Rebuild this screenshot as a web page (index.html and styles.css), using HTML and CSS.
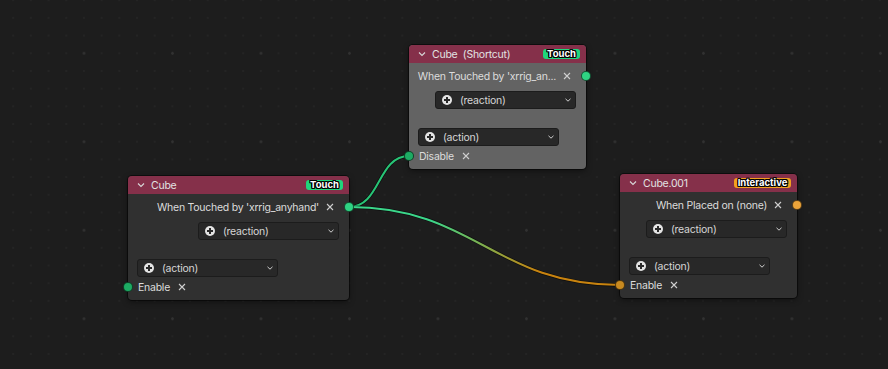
FILE: index.html
```html
<!DOCTYPE html>
<html lang="en">
<head>
    <meta charset="UTF-8">
    <title>Node Editor</title>
    <link rel="stylesheet" href="styles.css">
</head>
<body>
    <div class="canvas">
        <!-- links between sockets -->
        <svg class="links" width="888" height="369" viewBox="0 0 888 369">
            <defs>
                <linearGradient id="greenToOrange" gradientUnits="userSpaceOnUse" x1="349" y1="0" x2="620" y2="0">
                    <stop offset="0.3" stop-color="#3bd68a"/>
                    <stop offset="0.7" stop-color="#c8830f"/>
                </linearGradient>
            </defs>
            <path class="link-shadow" d="M349,207 C381,207 377,156 409,156"/>
            <path class="link" stroke="#28c476" d="M349,207 C381,207 377,156 409,156"/>
            <path class="link-shadow" d="M349,207 C475,207 494,285 620,285"/>
            <path class="link" stroke="url(#greenToOrange)" d="M349,207 C475,207 494,285 620,285"/>
        </svg>

        <div class="node node-shortcut active">
            <div class="node-header">
                <svg class="chev" viewBox="0 0 8 8"><polyline points="1,2.5 4,5.5 7,2.5"/></svg>
                <span class="title">Cube  (Shortcut)</span>
                <span class="badge touch">Touch</span>
            </div>
            <div class="node-body">
                <div class="row out">
                    <span class="label">When Touched by 'xrrig_an...</span>
                    <svg class="x" viewBox="0 0 8 8"><path d="M1,1 L7,7 M7,1 L1,7"/></svg>
                    <span class="socket green-out"></span>
                </div>
                <div class="dropdown reaction">
                    <span class="plus"></span><span class="dd-text">(reaction)</span>
                    <svg class="dd-chev" viewBox="0 0 6 4"><polyline points="0.5,0.8 3,3.2 5.5,0.8"/></svg>
                </div>
                <div class="dropdown action">
                    <span class="plus"></span><span class="dd-text">(action)</span>
                    <svg class="dd-chev" viewBox="0 0 6 4"><polyline points="0.5,0.8 3,3.2 5.5,0.8"/></svg>
                </div>
                <div class="row in">
                    <span class="socket green-in"></span>
                    <span class="label">Disable</span>
                    <svg class="x" viewBox="0 0 8 8"><path d="M1,1 L7,7 M7,1 L1,7"/></svg>
                </div>
            </div>
        </div>

        <div class="node node-cube">
            <div class="node-header">
                <svg class="chev" viewBox="0 0 8 8"><polyline points="1,2.5 4,5.5 7,2.5"/></svg>
                <span class="title">Cube</span>
                <span class="badge touch">Touch</span>
            </div>
            <div class="node-body">
                <div class="row out">
                    <span class="label">When Touched by 'xrrig_anyhand'</span>
                    <svg class="x" viewBox="0 0 8 8"><path d="M1,1 L7,7 M7,1 L1,7"/></svg>
                    <span class="socket green-out"></span>
                </div>
                <div class="dropdown reaction">
                    <span class="plus"></span><span class="dd-text">(reaction)</span>
                    <svg class="dd-chev" viewBox="0 0 6 4"><polyline points="0.5,0.8 3,3.2 5.5,0.8"/></svg>
                </div>
                <div class="dropdown action">
                    <span class="plus"></span><span class="dd-text">(action)</span>
                    <svg class="dd-chev" viewBox="0 0 6 4"><polyline points="0.5,0.8 3,3.2 5.5,0.8"/></svg>
                </div>
                <div class="row in">
                    <span class="socket green-in"></span>
                    <span class="label">Enable</span>
                    <svg class="x" viewBox="0 0 8 8"><path d="M1,1 L7,7 M7,1 L1,7"/></svg>
                </div>
            </div>
        </div>

        <div class="node node-placed">
            <div class="node-header">
                <svg class="chev" viewBox="0 0 8 8"><polyline points="1,2.5 4,5.5 7,2.5"/></svg>
                <span class="title">Cube.001</span>
                <span class="badge interactive">Interactive</span>
            </div>
            <div class="node-body">
                <div class="row out">
                    <span class="label">When Placed on (none)</span>
                    <svg class="x" viewBox="0 0 8 8"><path d="M1,1 L7,7 M7,1 L1,7"/></svg>
                    <span class="socket orange-out"></span>
                </div>
                <div class="dropdown reaction">
                    <span class="plus"></span><span class="dd-text">(reaction)</span>
                    <svg class="dd-chev" viewBox="0 0 6 4"><polyline points="0.5,0.8 3,3.2 5.5,0.8"/></svg>
                </div>
                <div class="dropdown action">
                    <span class="plus"></span><span class="dd-text">(action)</span>
                    <svg class="dd-chev" viewBox="0 0 6 4"><polyline points="0.5,0.8 3,3.2 5.5,0.8"/></svg>
                </div>
                <div class="row in">
                    <span class="socket orange-in"></span>
                    <span class="label">Enable</span>
                    <svg class="x" viewBox="0 0 8 8"><path d="M1,1 L7,7 M7,1 L1,7"/></svg>
                </div>
            </div>
        </div>
    </div>
</body>
</html>
```

FILE: styles.css
```css
* {
    margin: 0;
    padding: 0;
    box-sizing: border-box;
}

body {
    background: #1d1d1d;
    font-family: Inter, 'DejaVu Sans', sans-serif;
    font-size: 10.5px;
    letter-spacing: -0.25px;
    color: #dcdcdc;
}

/* node editor background with dot grid */
.canvas {
    position: relative;
    width: 888px;
    height: 369px;
    overflow: hidden;
    background-color: #1d1d1d;
    background-image:
        radial-gradient(circle, #313131 1px, transparent 1.6px),
        radial-gradient(circle, #242424 0.8px, transparent 1.3px);
    background-size: 88.5px 88.5px, 17.7px 17.7px;
    background-position: 39.75px 9.05px, 4.35px -8.65px;
}

.links {
    position: absolute;
    left: 0;
    top: 0;
}

.link-shadow {
    fill: none;
    stroke: rgba(0, 0, 0, 0.55);
    stroke-width: 3.5;
}

.link {
    fill: none;
    stroke-width: 2;
}

/* nodes: placement on the canvas */
.node {
    position: absolute;
    width: 177px;
    height: 124px;
    background: #303030;
    border-radius: 4px;
    box-shadow: 0 0 0 1px rgba(0, 0, 0, 0.5), 0 2px 6px rgba(0, 0, 0, 0.45);
}

.node.active {
    background: #636363;
}

.node-shortcut { left: 409px; top: 45px; }
.node-cube { left: 128px; top: 176px; width: 221px; }
.node-placed { left: 620px; top: 174px; }

.node-header {
    height: 18px;
    background: #85304a;
    border-radius: 4px 4px 0 0;
    display: flex;
    align-items: center;
    padding: 0 6px 0 9px;
    color: #e2e2e2;
}

.chev {
    width: 8px;
    height: 8px;
    fill: none;
    stroke: #d8d8d8;
    stroke-width: 1.1;
    margin-right: 6px;
}

.title {
    flex: 1;
    white-space: pre;
}

.badge {
    height: 10px;
    line-height: 10px;
    padding: 0 3px;
    border-radius: 3px;
    font-size: 9.5px;
    font-weight: 700;
    letter-spacing: 0;
    color: #fff;
    text-align: center;
    text-shadow: -1px 0 #000, 1px 0 #000, 0 -1px #000, 0 1px #000, -1px -1px #000, 1px 1px #000, 1px -1px #000, -1px 1px #000;
}

.badge.touch {
    background: #1fd67c;
    width: 37px;
}

.badge.interactive {
    background: #f2a01e;
    width: 57px;
}

.node-body {
    display: flex;
    flex-direction: column;
    padding-top: 3px;
}

.row {
    position: relative;
    height: 20px;
    display: flex;
    align-items: center;
    white-space: nowrap;
}

.row.out {
    justify-content: flex-end;
    padding: 0 15px 0 12px;
    gap: 7px;
}

.row.in {
    padding-left: 10px;
    gap: 8px;
}

.x {
    width: 8px;
    height: 8px;
    flex-shrink: 0;
    fill: none;
    stroke: #cfcfcf;
    stroke-width: 1.1;
}

.socket {
    position: absolute;
    top: 5px;
    width: 10px;
    height: 10px;
    border-radius: 50%;
    border: 1px solid rgba(0, 0, 0, 0.6);
}

.row.out .socket { right: -5px; }
.row.in .socket { left: -5px; }

.green-out { background: #2fd383; }
.green-in { background: #1dab63; }
.orange-out { background: #eca43a; }
.orange-in { background: #c88a20; }

.dropdown {
    width: 141px;
    height: 18px;
    display: flex;
    align-items: center;
    padding: 0 4px 0 6px;
    background: #282828;
    border: 1px solid #1c1c1c;
    border-radius: 3px;
    color: #d6d6d6;
}

.dropdown.reaction {
    align-self: flex-end;
    margin: 5px 10px 0 0;
}

.dropdown.action {
    margin: 19px 0 0 9px;
}

.plus {
    position: relative;
    width: 10px;
    height: 10px;
    border-radius: 50%;
    background: #e4e4e4;
    margin-right: 8px;
}

.plus::before,
.plus::after {
    content: '';
    position: absolute;
    background: #2a2a2a;
}

.plus::before {
    left: 2px;
    top: 4.25px;
    width: 6px;
    height: 1.5px;
}

.plus::after {
    left: 4.25px;
    top: 2px;
    width: 1.5px;
    height: 6px;
}

.dd-text {
    flex: 1;
}

.dd-chev {
    width: 6px;
    height: 4px;
    fill: none;
    stroke: #cfcfcf;
    stroke-width: 1;
}
```
